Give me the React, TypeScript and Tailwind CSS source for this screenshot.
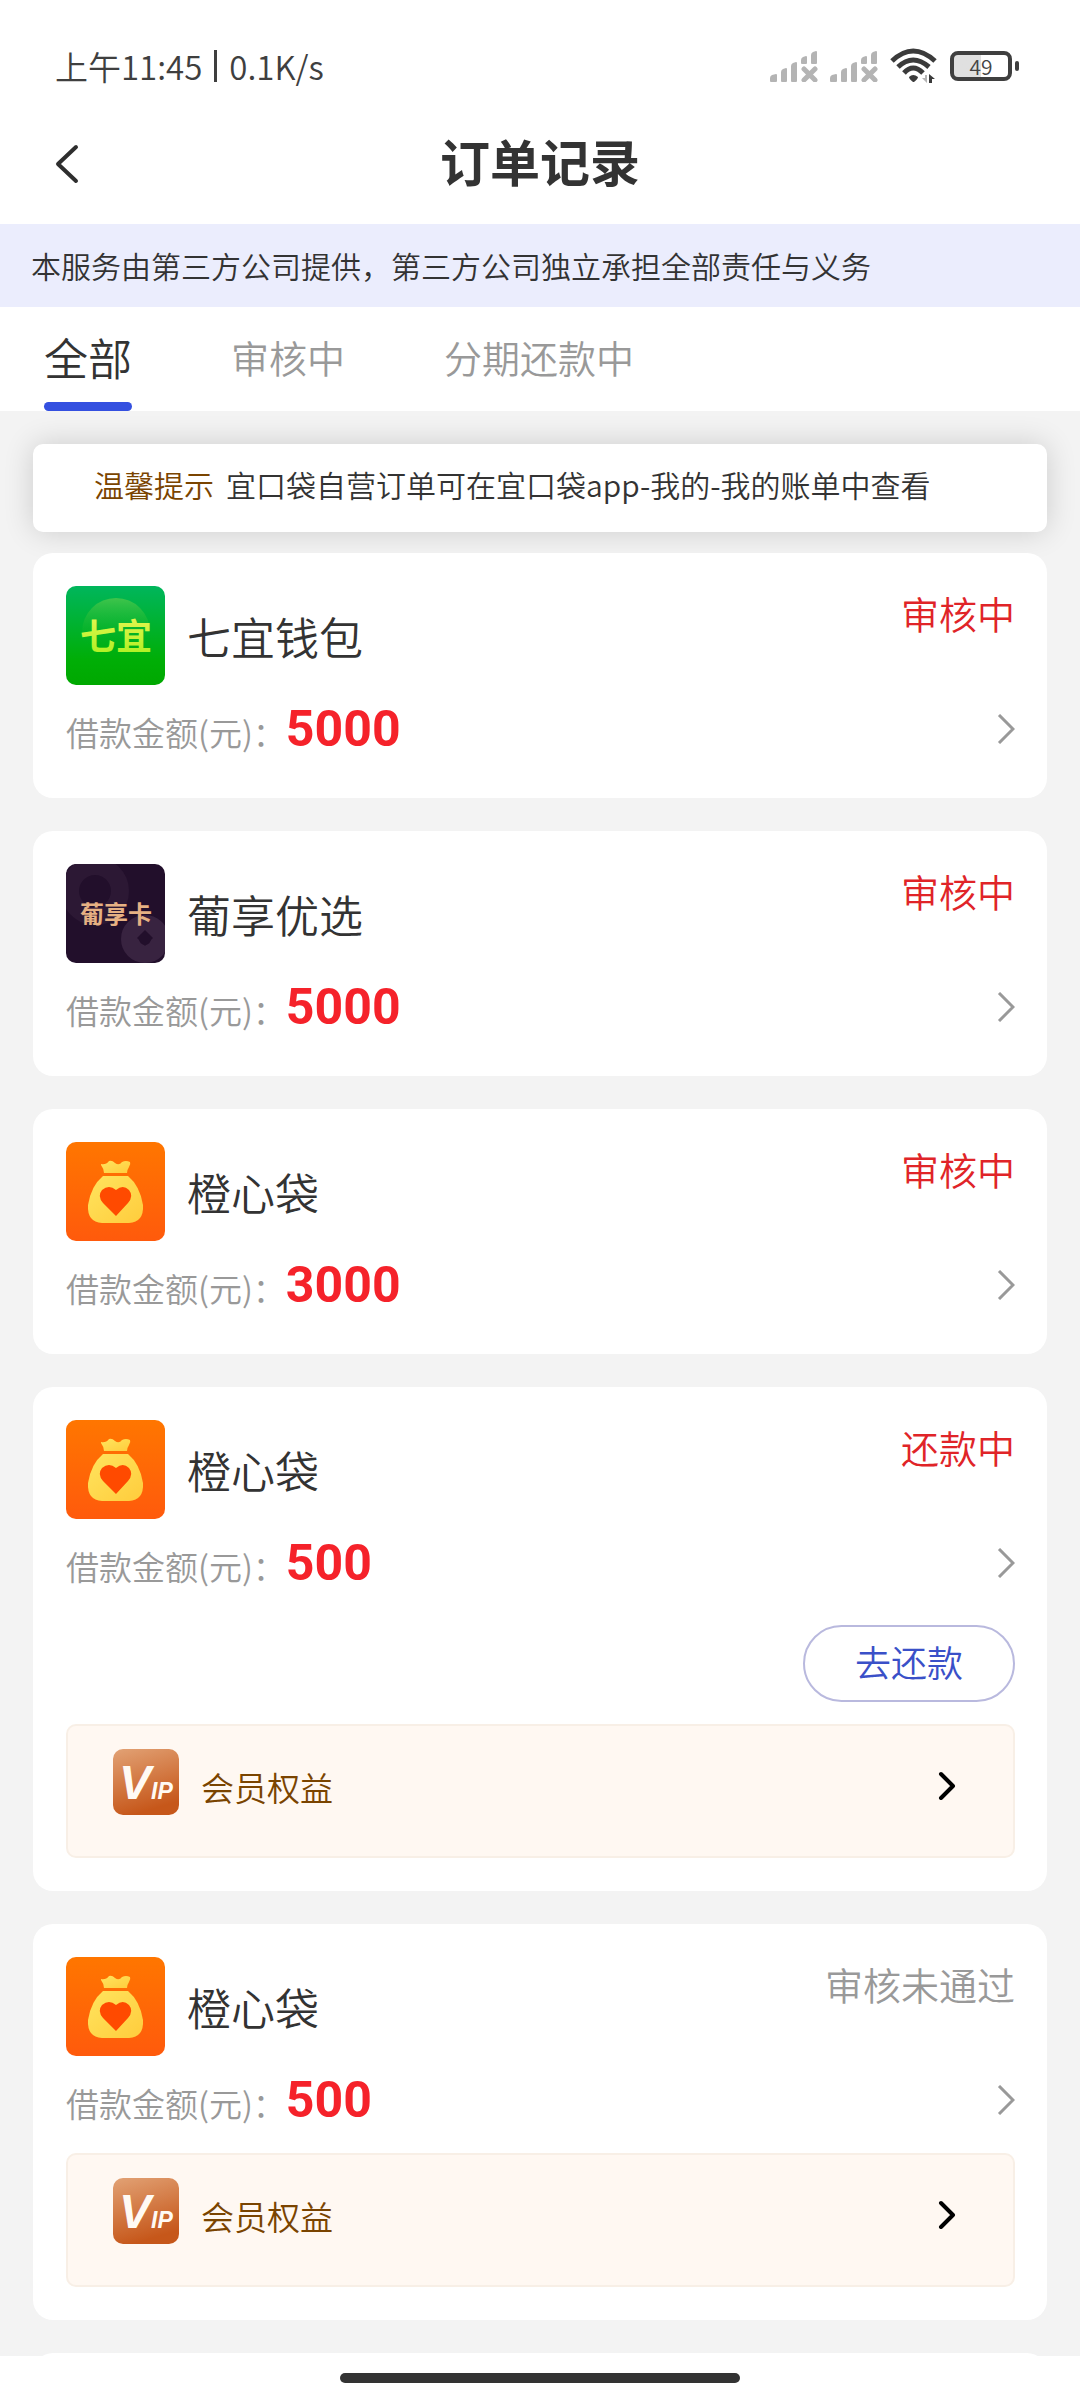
import React, { useState } from 'react';

type LogoKind = 'qiyi' | 'puxiang' | 'chengxin';

interface Order {
    id: number;
    logo: LogoKind;
    name: string;
    amount: number;
    status: string;
    rejected?: boolean;
    canRepay?: boolean;
    hasVip?: boolean;
}

const ORDERS: Order[] = [
    { id: 1, logo: 'qiyi', name: '七宜钱包', amount: 5000, status: '审核中' },
    { id: 2, logo: 'puxiang', name: '葡享优选', amount: 5000, status: '审核中' },
    { id: 3, logo: 'chengxin', name: '橙心袋', amount: 3000, status: '审核中' },
    { id: 4, logo: 'chengxin', name: '橙心袋', amount: 500, status: '还款中', canRepay: true, hasVip: true },
    { id: 5, logo: 'chengxin', name: '橙心袋', amount: 500, status: '审核未通过', rejected: true, hasVip: true },
];

const TABS = ['全部', '审核中', '分期还款中'];

const SignalIcon: React.FC = () => (
    <svg width="48" height="32" viewBox="0 0 48 32" fill="#b4b4b4" aria-hidden="true">
        <path d="M0 31v-3q0-2 2-3l4-1q1 0 1 1v6q0 1-1 1H1q-1 0-1-1z" />
        <path d="M11 31V22q0-2 2-3l3-1q1 0 1 1v12q0 1-1 1h-4q-1 0-1-1z" />
        <path d="M21 31V16q0-2 2-3l3-1q1 0 1 1v18q0 1-1 1h-4q-1 0-1-1z" />
        <path d="M31 13V10q0-2 2-3l3-1q1 0 1 1v6q0 1-1 1h-4q-1 0-1-1z" />
        <path d="M41 13V5q0-2 2-3l3-1q1 0 1 1v11q0 1-1 1h-4q-1 0-1-1z" />
        <path d="M34 19l11 11M45 19L34 30" stroke="#b4b4b4" strokeWidth="5" strokeLinecap="round" />
    </svg>
);

const WifiIcon: React.FC = () => (
    <svg width="48" height="36" viewBox="0 0 48 36" fill="none" aria-hidden="true">
        <g stroke="#3b3b3b" strokeWidth="5">
            <path d="M2 13Q23-7 45 13" />
            <path d="M8 19Q23 5 39 19" />
            <path d="M14 25Q23 15 33 25" />
        </g>
        <path d="M19 29q4-4 9 0q0 2-4 5h-1q-4-3-4-5z" fill="#3b3b3b" />
        <path d="M37 27v8l-5-5h3v-3z" fill="#b4b4b4" />
        <path d="M39 35v-9l6 5h-3v4z" fill="#3b3b3b" />
    </svg>
);

const Battery: React.FC = () => (
    <div className="flex items-center gap-[3px]">
        <div className="flex h-[30px] w-[62px] items-center justify-center rounded-lg border-4 border-[#3f3f3f] bg-linear-to-r from-[#e0e0e0] from-50% to-white to-50% text-[21px] leading-none text-[#444]">
            49
        </div>
        <div className="h-2.5 w-1 rounded-sm bg-[#3f3f3f]" />
    </div>
);

const StatusBar: React.FC = () => (
    <div className="flex h-[104px] items-center justify-between pt-7 pr-[61px] pl-[55px]">
        <div className="flex items-center gap-3 text-[33px] leading-10 text-[#3f3f3f]">
            <span>上午11:45</span>
            <span className="h-8 w-[3px] bg-[#3f3f3f]" />
            <span>0.1K/s</span>
        </div>
        <div className="flex items-center gap-3">
            <SignalIcon />
            <SignalIcon />
            <WifiIcon />
            <Battery />
        </div>
    </div>
);

const QiyiLogo: React.FC = () => (
    <svg width="99" height="99" viewBox="0 0 99 99" className="rounded-[10px]" role="img" aria-label="七宜">
        <defs>
            <linearGradient id="qiyiBg" x1="0" y1="0" x2="0" y2="1">
                <stop offset="0" stopColor="#00b65c" />
                <stop offset="0.75" stopColor="#00ae06" />
                <stop offset="1" stopColor="#00a800" />
            </linearGradient>
            <linearGradient id="qiyiGlow" x1="0" y1="0" x2="0" y2="1">
                <stop offset="0" stopColor="#4fc84a" stopOpacity="0.8" />
                <stop offset="0.7" stopColor="#00b020" stopOpacity="0" />
            </linearGradient>
            <linearGradient id="qiyiText" x1="0" y1="0" x2="0" y2="1">
                <stop offset="0" stopColor="#f2f65a" />
                <stop offset="1" stopColor="#a6f01c" />
            </linearGradient>
        </defs>
        <rect width="99" height="99" fill="url(#qiyiBg)" />
        <circle cx="50" cy="46" r="34" fill="url(#qiyiGlow)" />
        <text x="50" y="64" textAnchor="middle" fontSize="36" fontWeight="700" fill="url(#qiyiText)">七宜</text>
    </svg>
);

const PuxiangLogo: React.FC = () => (
    <svg width="99" height="99" viewBox="0 0 99 99" className="rounded-[10px]" role="img" aria-label="葡享卡">
        <rect width="99" height="99" fill="#220f2b" />
        <circle cx="29" cy="27" r="25" fill="none" stroke="#2c1834" strokeWidth="18" />
        <circle cx="79" cy="75" r="15" fill="none" stroke="#382340" strokeWidth="18" />
        <path d="M79 66l8 8-8 8-8-8z" fill="#220f2b" />
        <text x="50" y="59" textAnchor="middle" fontSize="24" fontWeight="700" fill="#e6b183">葡享卡</text>
    </svg>
);

const ChengxinLogo: React.FC = () => (
    <svg width="99" height="99" viewBox="0 0 99 99" className="rounded-[10px]" role="img" aria-label="橙心袋">
        <defs>
            <linearGradient id="bagBg" x1="0" y1="0" x2="0" y2="1">
                <stop offset="0" stopColor="#ff7600" />
                <stop offset="1" stopColor="#ff5a0c" />
            </linearGradient>
            <linearGradient id="bagFill" x1="0" y1="0" x2="1" y2="1">
                <stop offset="0" stopColor="#ffe45e" />
                <stop offset="1" stopColor="#ffcc3c" />
            </linearGradient>
        </defs>
        <rect width="99" height="99" fill="url(#bagBg)" />
        <path d="M35 22q5 1 8-3q3-1 6 2q4 3 7-1q4-2 8 0q1 2-1 5q-2 3-2 6H38q0-4-3-8z" fill="url(#bagFill)" />
        <path d="M37 34h25q12 10 15 29q1 17-14 18H36q-15-1-14-18q3-19 15-29z" fill="url(#bagFill)" />
        <path d="M50 74L37 61q-6-7-1-13q7-6 14 0q7-6 13 0q5 6-1 13z" fill="#ff4a00" />
    </svg>
);

const LOGOS: Record<LogoKind, React.FC> = {
    qiyi: QiyiLogo,
    puxiang: PuxiangLogo,
    chengxin: ChengxinLogo,
};

const VipLogo: React.FC = () => (
    <svg width="66" height="66" viewBox="0 0 66 66" className="rounded-[10px]" aria-hidden="true">
        <defs>
            <linearGradient id="vipBg" x1="0" y1="0" x2="0.3" y2="1">
                <stop offset="0" stopColor="#e2a275" />
                <stop offset="1" stopColor="#c6571a" />
            </linearGradient>
        </defs>
        <rect width="66" height="66" fill="url(#vipBg)" />
        <text x="6" y="50" fontSize="48" fontFamily="Liberation Sans, sans-serif" fontWeight="700" fontStyle="italic" fill="#fffaf4">
            V<tspan fontSize="23">IP</tspan>
        </text>
    </svg>
);

const OrderCard: React.FC<{ order: Order }> = ({ order }) => {
    const Logo = LOGOS[order.logo];

    return (
        <article className="rounded-[20px] bg-white py-[33px] pr-8 pl-[33px]">
            <div className="flex items-start gap-[22px]">
                <Logo />
                <h2 className="flex-1 self-center text-[44px] leading-[60px] text-[#333]">{order.name}</h2>
                <span className={`text-[38px] leading-[54px] ${order.rejected ? 'text-[#999]' : 'text-[#e02428]'}`}>
                    {order.status}
                </span>
            </div>

            <a href="#detail" className="flex h-20 items-center justify-between pt-2">
                <span className="flex items-baseline">
                    <span className="text-[33px] text-[#999]">借款金额(元)：</span>
                    <span className="font-[Roboto] text-[50px] leading-[60px] font-bold text-[#f5222a]">{order.amount}</span>
                </span>
                <svg width="18" height="30" viewBox="0 0 18 30" fill="none" stroke="#999" strokeWidth="3" aria-hidden="true">
                    <path d="M2 1l14 14L2 29" />
                </svg>
            </a>

            {order.canRepay && (
                <div className="flex justify-end pt-[26px] pb-[5px]">
                    <button className="h-[77px] w-[212px] rounded-full border-2 border-[#b9b9de] pb-1.5 text-[36px] leading-[50px] text-[#3a50c8]">
                        去还款
                    </button>
                </div>
            )}

            {order.hasVip && (
                <a
                    href="#vip"
                    className="mt-[17px] flex h-[134px] items-start rounded-[10px] border-2 border-[#f8efe6] bg-[#fff8f2] pt-[23px] pr-[57px] pl-[45px]"
                >
                    <VipLogo />
                    <span className="flex-1 pt-2 pl-[22px] text-[33px] leading-[60px] text-[#7a4400]">会员权益</span>
                    <svg width="18" height="30" viewBox="0 0 18 30" className="mt-[21px]" fill="none" stroke="#000" strokeWidth="4" strokeLinecap="round" strokeLinejoin="round" aria-hidden="true">
                        <path d="M3 4l12 12L3 28" />
                    </svg>
                </a>
            )}
        </article>
    );
};

const App: React.FC = () => {
    const [activeTab, setActiveTab] = useState(TABS[0]);

    return (
        <div className="flex h-screen flex-col bg-white font-['Noto_Sans_CJK_SC',sans-serif] font-[350]">
            <StatusBar />

            {/* Header */}
            <header className="grid h-[120px] grid-cols-[1fr_auto_1fr] items-center px-[54px]">
                <button aria-label="返回" className="justify-self-start">
                    <svg width="26" height="42" viewBox="0 0 26 42" fill="none" stroke="#2e2e2e" strokeWidth="4" strokeLinecap="round" strokeLinejoin="round">
                        <path d="M22 4L4 21l18 17" />
                    </svg>
                </button>
                <h1 className="pb-2 text-[50px] leading-[60px] font-bold text-[#333]">订单记录</h1>
            </header>

            <p className="bg-[#ebedfd] px-[31px] py-[19px] text-[30px] leading-[45px] text-[#333]">
                本服务由第三方公司提供，第三方公司独立承担全部责任与义务
            </p>

            {/* Tabs */}
            <nav className="flex h-[104px] shrink-0 gap-[99px] px-11">
                {TABS.map(tab => (
                    <button
                        key={tab}
                        onClick={() => setActiveTab(tab)}
                        className={`flex flex-col items-center justify-between leading-[100px] ${tab === activeTab ? 'text-[44px] text-[#333]' : 'text-[38px] text-[#999]'}`}
                    >
                        <span className="h-[95px]">{tab}</span>
                        {tab === activeTab && <span className="h-[9px] w-full rounded-full bg-[#3450e0]" />}
                    </button>
                ))}
            </nav>

            {/* Order list */}
            <main className="min-h-0 flex-1 overflow-y-auto bg-[#f3f3f3] px-[33px] pt-[33px] [scrollbar-width:none]">
                <p className="mb-[21px] flex h-[88px] items-center gap-3 rounded-[10px] bg-white px-[61px] pb-2 text-[30px] leading-[45px] shadow-[0_0_30px_rgba(0,0,0,0.16)]">
                    <span className="text-[#7a4400]">温馨提示</span>
                    <span className="text-[#333]">宜口袋自营订单可在宜口袋app-我的-我的账单中查看</span>
                </p>
                <div className="flex flex-col gap-[33px]">
                    {ORDERS.map(order => (
                        <OrderCard key={order.id} order={order} />
                    ))}
                    <div className="h-[245px] rounded-[20px] bg-white" />
                </div>
            </main>

            {/* Gesture bar */}
            <footer className="flex h-11 shrink-0 justify-center bg-white pt-[17px]">
                <div className="h-2.5 w-[37%] rounded-full bg-[#333]" />
            </footer>
        </div>
    );
};

export default App;
